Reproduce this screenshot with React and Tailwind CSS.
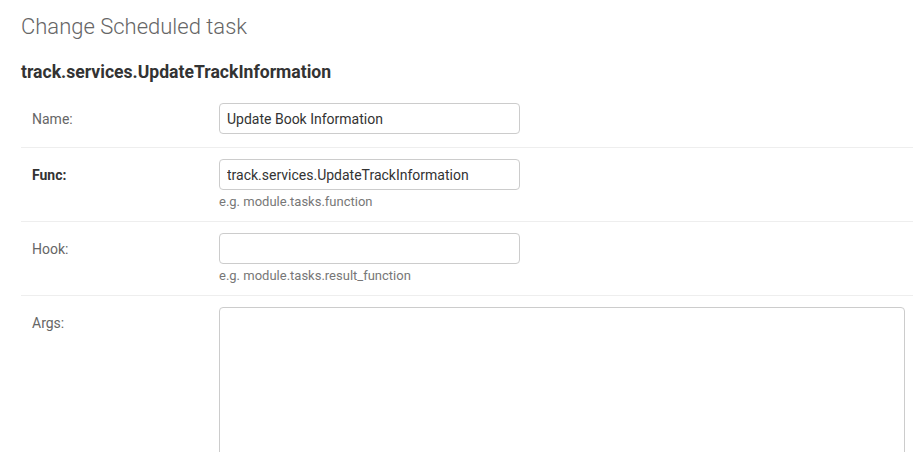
const fields = [
  { label: 'Name:', value: 'Update Book Information', required: false },
  { label: 'Func:', value: 'track.services.UpdateTrackInformation', help: 'e.g. module.tasks.function', required: true },
  { label: 'Hook:', value: '', help: 'e.g. module.tasks.result_function', required: false },
]

const FormRow = ({ label, required, children, last }) => (
  <div className={`flex items-start pl-[11px] pt-[11px] ${last ? '' : 'border-b border-[#eee]'}`}>
    <label
      className={`w-[187px] shrink-0 pt-[6px] text-[14px] leading-[20px] ${
        required ? 'font-bold text-[#333]' : 'text-[#666]'
      }`}
    >
      {label}
    </label>
    <div className="flex-1 min-w-0">{children}</div>
  </div>
)

export default function App() {
  return (
    <div className="min-h-screen bg-white pl-[21px] pt-[14px] overflow-hidden" style={{ fontFamily: 'Roboto, "Liberation Sans", sans-serif' }}>
      <h1 className="text-[22px] leading-[26px] font-light text-[#666]">Change Scheduled task</h1>

      <h2 className="mt-[21px] text-[17.6px] leading-[22px] font-bold text-[#333]">
        track.services.UpdateTrackInformation
      </h2>

      <div className="mt-[9px]">
        {fields.map((f) => (
          <FormRow key={f.label} label={f.label} required={f.required}>
            <div className={f.help ? 'pb-[11px]' : 'pb-[13px]'}>
              <input
                type="text"
                defaultValue={f.value}
                className="block w-[301px] h-[31px] px-[7px] border border-[#ccc] rounded-[4px] text-[14px] text-[#333] outline-none"
              />
              {f.help && (
                <div className="mt-[4px] text-[13px] leading-[16px] text-[#777]">{f.help}</div>
              )}
            </div>
          </FormRow>
        ))}

        <FormRow label="Args:" last>
          <textarea className="block w-[686px] h-[200px] border border-[#ccc] rounded-[4px] resize-none outline-none" />
        </FormRow>
      </div>
    </div>
  )
}
